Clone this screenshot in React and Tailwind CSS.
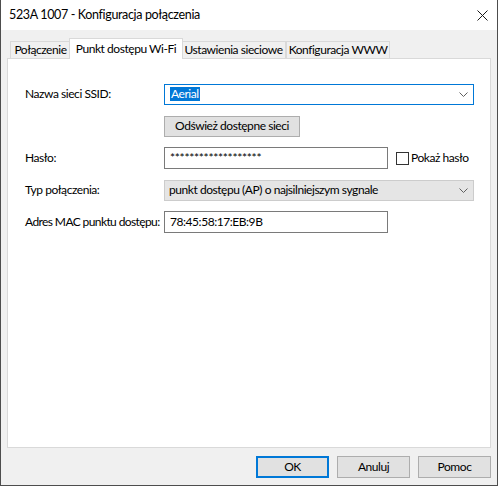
import React from 'react';

const font = { fontFamily: 'Lato, "Liberation Sans", sans-serif' };

function Chevron() {
  return (
    <svg width="9" height="5" viewBox="0 0 9 5" className="shrink-0">
      <path d="M0.5 0.5 L4.5 4.5 L8.5 0.5" fill="none" stroke="#606060" strokeWidth="1" />
    </svg>
  );
}

function Row({ label, children, tight }) {
  return (
    <div className="flex items-center h-[22px]">
      <div className={`w-[139px] shrink-0 whitespace-nowrap ${tight ? 'tracking-[-0.6px]' : ''}`}>{label}</div>
      {children}
    </div>
  );
}

export default function App() {
  const tabs = [
    { name: 'Połączenie', w: 'w-[61px]' },
    { name: 'Punkt dostępu Wi-Fi', w: 'w-[114px]', active: true },
    { name: 'Ustawienia sieciowe', w: 'w-[105px]' },
    { name: 'Konfiguracja WWW', w: 'w-[104px]' },
  ];

  return (
    <div
      className="w-[498px] h-[486px] flex flex-col bg-[#f0f0f0] border-x border-b border-[#4d4d4d] text-[12px] tracking-[-0.45px] text-black overflow-hidden"
      style={font}
    >
      {/* title bar */}
      <div className="h-[30px] shrink-0 bg-white flex items-center justify-between pl-[8px] pr-[9px]">
        <span className="text-[12.5px] tracking-[-0.35px]">523A 1007 - Konfiguracja połączenia</span>
        <svg width="11" height="11" viewBox="0 0 11 11">
          <path d="M0.5 0.5 L10.5 10.5 M10.5 0.5 L0.5 10.5" stroke="#1a1a1a" strokeWidth="1" />
        </svg>
      </div>

      <div className="flex-1 flex flex-col pt-[8px] px-[6px]">
        {/* tabs */}
        <div className="flex items-end h-[20px] pl-[3px] relative z-10">
          {tabs.map((t) =>
            t.active ? (
              <div
                key={t.name}
                className={`${t.w} shrink-0 whitespace-nowrap h-[21px] -mb-[1px] -mx-[2px] bg-white border border-b-0 border-[#d9d9d9] flex items-center justify-center relative z-10`}
              >
                {t.name}
              </div>
            ) : (
              <div
                key={t.name}
                className={`${t.w} shrink-0 whitespace-nowrap h-[17px] bg-[#f0f0f0] border border-b-0 border-[#d9d9d9] flex items-center justify-center`}
              >
                {t.name}
              </div>
            )
          )}
        </div>

        {/* panel */}
        <div className="h-[390px] bg-white border border-[#d9d9d9] pl-[17px] pt-[24px] flex flex-col gap-[10px]">
          <Row label="Nazwa sieci SSID:">
            <div className="w-[310px] h-[21px] border border-[#0078d7] bg-white flex items-center justify-between pl-[5px] pr-[5px]">
              <span className="bg-[#0078d7] text-white px-[1px] leading-[14px]">Aerial</span>
              <Chevron />
            </div>
          </Row>
          <Row label="">
            <div className="w-[136px] h-[21px] border border-[#adadad] bg-[#e1e1e1] flex items-center justify-center whitespace-nowrap">
              Odśwież dostępne sieci
            </div>
          </Row>
          <Row label="Hasło:">
            <div className="w-[224px] h-[22px] border border-[#7a7a7a] bg-white flex items-center pl-[5px] tracking-[-0.3px]">
              *******************
            </div>
            <div className="flex items-center ml-[8px] whitespace-nowrap">
              <div className="w-[13px] h-[13px] border border-[#333333] bg-white" />
              <span className="ml-[2px]">Pokaż hasło</span>
            </div>
          </Row>
          <Row label="Typ połączenia:">
            <div className="w-[310px] h-[21px] border border-[#cccccc] bg-[#e5e5e5] flex items-center justify-between pl-[4px] pr-[5px] whitespace-nowrap">
              <span>punkt dostępu (AP) o najsilniejszym sygnale</span>
              <Chevron />
            </div>
          </Row>
          <Row label="Adres MAC punktu dostępu:" tight>
            <div className="w-[224px] h-[22px] border border-[#7a7a7a] bg-white flex items-center pl-[5px]">
              78:45:58:17:EB:9B
            </div>
          </Row>
        </div>

        {/* buttons */}
        <div className="flex justify-end gap-[8px] mt-[8px]">
          <div className="w-[73px] h-[22px] border-2 border-[#0078d7] bg-[#e1e1e1] flex items-center justify-center">
            OK
          </div>
          <div className="w-[73px] h-[22px] border border-[#adadad] bg-[#e1e1e1] flex items-center justify-center">
            Anuluj
          </div>
          <div className="w-[73px] h-[22px] border border-[#adadad] bg-[#e1e1e1] flex items-center justify-center">
            Pomoc
          </div>
        </div>
      </div>
    </div>
  );
}
